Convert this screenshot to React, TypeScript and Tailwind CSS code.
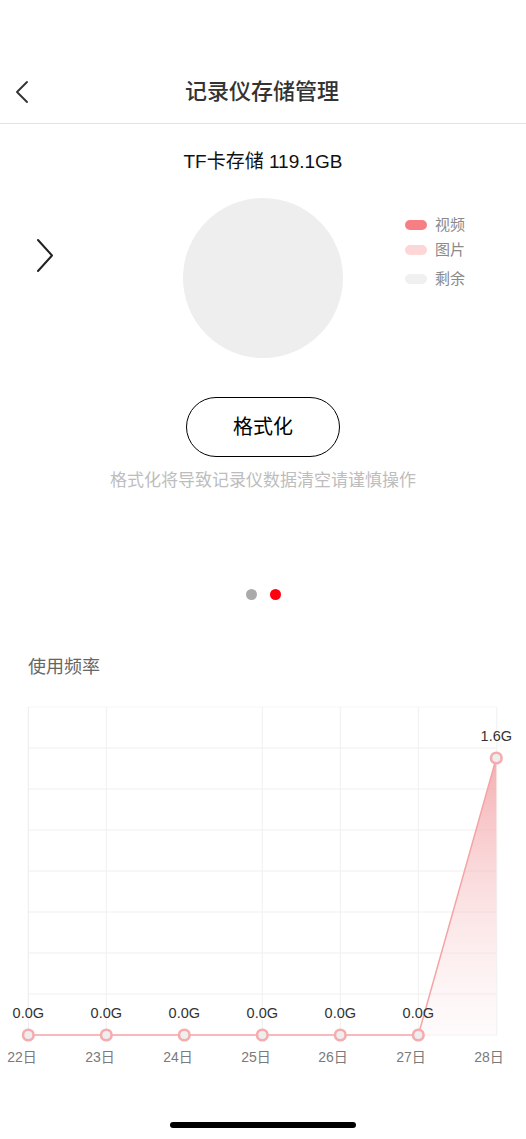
import React from "react";

const OY = 679;
const xs = [28.3, 106.3, 184.3, 262.3, 340.3, 418.3, 496.3];
const ys = [1035, 1035, 1035, 1035, 1035, 1035, 758];
const vals = ["0.0G", "0.0G", "0.0G", "0.0G", "0.0G", "0.0G", "1.6G"];
const dates = ["22日", "23日", "24日", "25日", "26日", "27日", "28日"];
const dateX = [22, 100, 178, 256, 333, 411, 489];
const hLines = [748, 789, 830, 871, 912, 953, 994];
const vLines = [106.3, 262.3, 340.3, 418.3];

function Chart() {
  const y = (v: number) => v - OY;
  const linePts = xs.map((x, i) => `${x},${y(ys[i])}`).join(" ");
  return (
    <svg width={526} height={396} viewBox="0 0 526 396" className="block">
      <defs>
        <linearGradient id="area" x1="0" y1={y(758)} x2="0" y2={y(1035)} gradientUnits="userSpaceOnUse">
          <stop offset="0" stopColor="#f29a9e" stopOpacity="0.8" />
          <stop offset="1" stopColor="#fbe3e4" stopOpacity="0.15" />
        </linearGradient>
      </defs>
      <line x1={28.3} y1={y(707)} x2={496.3} y2={y(707)} stroke="#f6f6f6" strokeWidth={1} />
      {hLines.map((h) => (
        <line key={h} x1={28.3} y1={y(h)} x2={496.3} y2={y(h)} stroke="#efefef" strokeWidth={1} />
      ))}
      <line x1={28.3} y1={y(707)} x2={28.3} y2={y(1035)} stroke="#ececec" strokeWidth={1} />
      {vLines.map((v) => (
        <line key={v} x1={v} y1={y(707)} x2={v} y2={y(1035)} stroke="#f1f1f1" strokeWidth={1} />
      ))}
      <line x1={496.8} y1={y(707)} x2={496.8} y2={y(1035)} stroke="#f0f0f0" strokeWidth={1} />
      <line x1={418.3} y1={y(1035)} x2={496.8} y2={y(1035)} stroke="#f3f3f3" strokeWidth={1} />
      <polygon
        points={`${xs[5]},${y(1035)} ${xs[6]},${y(758)} ${xs[6]},${y(1035)}`}
        fill="url(#area)"
      />
      <polyline points={linePts} fill="none" stroke="#f5a3a7" strokeWidth={1.5} />
      {xs.map((x, i) => (
        <circle key={i} cx={x} cy={y(ys[i])} r={5.3} fill="#eeeeee" stroke="#f6abae" strokeWidth={2.6} />
      ))}
      {xs.map((x, i) => (
        <text
          key={"v" + i}
          x={x}
          y={y(ys[i] - 22) + 5}
          textAnchor="middle"
          fontSize={14.5}
          fill="#333333"
          fontFamily="'Liberation Sans', 'Noto Sans CJK SC', sans-serif"
        >
          {vals[i]}
        </text>
      ))}
      {dateX.map((x, i) => (
        <text
          key={"d" + i}
          x={x}
          y={y(1057) + 5}
          textAnchor="middle"
          fontSize={14}
          fill="#7a7a7a"
          fontFamily="'Liberation Sans', 'Noto Sans CJK SC', sans-serif"
        >
          {dates[i]}
        </text>
      ))}
    </svg>
  );
}

export default function App() {
  return (
    <div className="w-[526px] h-[1139px] bg-white font-['Liberation_Sans','Noto_Sans_CJK_SC',sans-serif] flex flex-col overflow-hidden">
      <div className="mt-[61px] h-[63px] border-b border-[#e3e3e3] grid grid-cols-[60px_1fr_60px] items-center">
        <div className="pl-[14px] flex items-center">
          <svg width="16" height="24" viewBox="0 0 16 24">
            <polyline points="13,2 3,12 13,22" fill="none" stroke="#333" strokeWidth="1.9" strokeLinecap="round" strokeLinejoin="round" />
          </svg>
        </div>
        <div className="text-center text-[22px] leading-[28px] font-medium text-[#333] -mt-[1px] pr-[2px]">记录仪存储管理</div>
        <div />
      </div>

      <div className="mt-[26px] text-center text-[19px] leading-[24px] text-[#111]">TF卡存储 119.1GB</div>

      <div className="mt-[24px] h-[160px] flex items-start">
        <div className="ml-[36px] mt-[40px] w-[18px]">
          <svg width="18" height="36" viewBox="0 0 18 36">
            <polyline points="2,2 16,17.5 2,33" fill="none" stroke="#222" strokeWidth="2" strokeLinecap="round" strokeLinejoin="round" />
          </svg>
        </div>
        <div className="ml-[129px] w-[160px] h-[160px] rounded-full bg-[#eeeeee]" />
        <div className="ml-[62px] mt-[18px] flex flex-col text-[15px] leading-[18px] text-[#8a8a8a]">
          <div className="flex items-center gap-[8px]">
            <span className="w-[22px] h-[10px] rounded-full bg-[#f77f83]" />
            <span>视频</span>
          </div>
          <div className="flex items-center gap-[8px] mt-[7px]">
            <span className="w-[22px] h-[10px] rounded-full bg-[#fdd6d8]" />
            <span>图片</span>
          </div>
          <div className="flex items-center gap-[8px] mt-[11px]">
            <span className="w-[22px] h-[10px] rounded-full bg-[#f0f0f0]" />
            <span>剩余</span>
          </div>
        </div>
      </div>

      <div className="mt-[39px] flex justify-center">
        <div className="w-[154px] h-[60px] rounded-full border-[1.5px] border-black flex items-center justify-center text-[20px] text-black">
          格式化
        </div>
      </div>
      <div className="mt-[14px] text-center text-[17px] leading-[20px] text-[#bdbdbd]">格式化将导致记录仪数据清空请谨慎操作</div>

      <div className="mt-[98px] flex justify-center gap-[13px] pl-[1px]">
        <span className="w-[11px] h-[11px] rounded-full bg-[#aaaaaa]" />
        <span className="w-[11px] h-[11px] rounded-full bg-[#ff0010]" />
      </div>

      <div className="mt-[55px] pl-[28px] text-[18px] leading-[24px] text-[#666]">使用频率</div>
      <Chart />

      <div className="mt-[47px] flex justify-center">
        <div className="w-[186px] h-[6px] rounded-full bg-black" />
      </div>
    </div>
  );
}
